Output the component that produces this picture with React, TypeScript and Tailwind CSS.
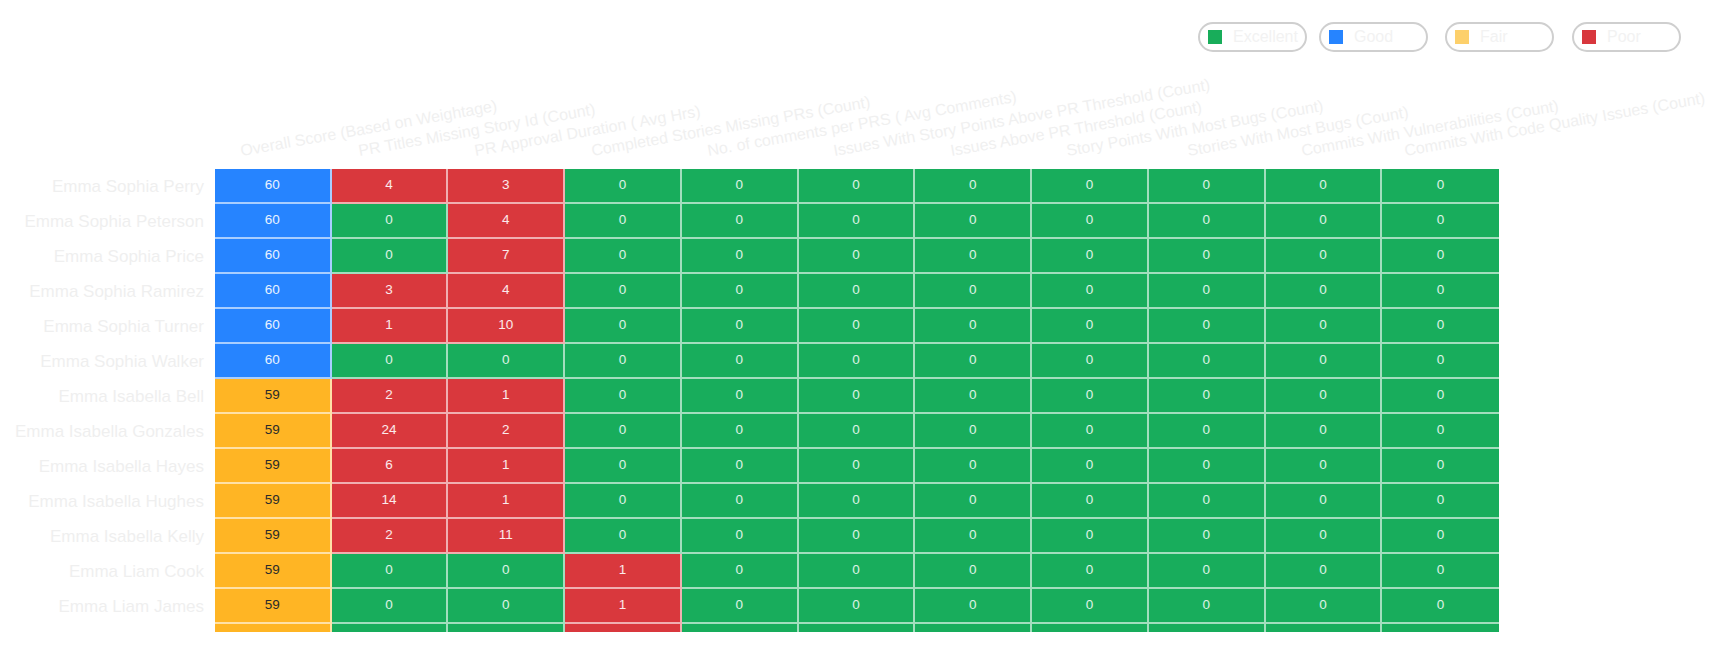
import React from "react";

type Tone = "excellent" | "good" | "fair" | "poor";

const cellTone: Record<Tone, string> = {
  excellent: "bg-[#18ad5c] text-white/85",
  good: "bg-[#2684ff] text-white/90",
  fair: "bg-[#ffb524] text-[#2b2b2b]",
  poor: "bg-[#d9383d] text-white/90",
};

const legend = [
  { label: "Excellent", swatch: "bg-[#18ad5a]", gap: "" },
  { label: "Good", swatch: "bg-[#2684ff]", gap: "ml-[12px]" },
  { label: "Fair", swatch: "bg-[#fdd06b]", gap: "ml-[17px]" },
  { label: "Poor", swatch: "bg-[#d8373d]", gap: "ml-[18px]" },
];

// left offset of each rotated label inside its column
const columns = [
  { label: "Overall Score (Based on Weightage)", offset: "ml-[27px]" },
  { label: "PR Titles Missing Story Id (Count)", offset: "ml-[28px]" },
  { label: "PR Approval Duration ( Avg Hrs)", offset: "ml-[28px]" },
  { label: "Completed Stories Missing PRs (Count)", offset: "ml-[28px]" },
  { label: "No. of comments per PRS ( Avg Comments)", offset: "ml-[27px]" },
  { label: "Issues With Story Points Above PR Threshold (Count)", offset: "ml-[36px]" },
  { label: "Issues Above PR Threshold (Count)", offset: "ml-[37px]" },
  { label: "Story Points With Most Bugs (Count)", offset: "ml-[36px]" },
  { label: "Stories With Most Bugs (Count)", offset: "ml-[40px]" },
  { label: "Commits With Vulnerabilities (Count)", offset: "ml-[37px]" },
  { label: "Commits With Code Quality Issues (Count)", offset: "ml-[24px]" },
];

const rows: { name: string; score: number; prTitles: number; approval: number; missingPrs?: number }[] = [
  { name: "Emma Sophia Perry", score: 60, prTitles: 4, approval: 3 },
  { name: "Emma Sophia Peterson", score: 60, prTitles: 0, approval: 4 },
  { name: "Emma Sophia Price", score: 60, prTitles: 0, approval: 7 },
  { name: "Emma Sophia Ramirez", score: 60, prTitles: 3, approval: 4 },
  { name: "Emma Sophia Turner", score: 60, prTitles: 1, approval: 10 },
  { name: "Emma Sophia Walker", score: 60, prTitles: 0, approval: 0 },
  { name: "Emma Isabella Bell", score: 59, prTitles: 2, approval: 1 },
  { name: "Emma Isabella Gonzales", score: 59, prTitles: 24, approval: 2 },
  { name: "Emma Isabella Hayes", score: 59, prTitles: 6, approval: 1 },
  { name: "Emma Isabella Hughes", score: 59, prTitles: 14, approval: 1 },
  { name: "Emma Isabella Kelly", score: 59, prTitles: 2, approval: 11 },
  { name: "Emma Liam Cook", score: 59, prTitles: 0, approval: 0, missingPrs: 1 },
  { name: "Emma Liam James", score: 59, prTitles: 0, approval: 0, missingPrs: 1 },
  { name: "Emma Liam Powell", score: 59, prTitles: 0, approval: 0, missingPrs: 1 },
];

function toneFor(col: number, value: number): Tone {
  if (col === 0) return value >= 60 ? "good" : "fair";
  return value > 0 ? "poor" : "excellent";
}

export default function App() {
  return (
    <div className="w-[1711px] h-[650px] bg-white overflow-hidden font-['Liberation_Sans',Arial,sans-serif]">
      {/* Legend */}
      <div className="flex justify-end pt-[22px] pr-[30px]">
        {legend.map((l) => (
          <div
            key={l.label}
            className={`${l.gap} flex items-center h-[30px] w-[109px] rounded-full border-2 border-[#cfcfcf] pl-[8px]`}
          >
            <span className={`h-[14px] w-[14px] ${l.swatch}`} />
            <span className="ml-[11px] text-[16px] leading-none text-[#f2f2f2]">{l.label}</span>
          </div>
        ))}
      </div>

      {/* Column labels */}
      <div className="flex h-[117px]">
        <div className="w-[215px] shrink-0" />
        <div className="grid grid-cols-11 w-[1284px] items-end pb-[10px]">
          {columns.map((c) => (
            <div key={c.label} className="h-[16px] relative">
              <span
                className={`${c.offset} block w-max whitespace-nowrap text-[16px] leading-none text-[#f0f0f0] origin-bottom-left -rotate-[10deg]`}
              >
                {c.label}
              </span>
            </div>
          ))}
        </div>
      </div>

      {/* Body */}
      <div className="h-[463px] overflow-hidden">
        {rows.map((r) => {
          const values = [r.score, r.prTitles, r.approval, r.missingPrs ?? 0, 0, 0, 0, 0, 0, 0, 0];
          return (
            <div key={r.name} className="flex h-[35px]">
              <div className="w-[204px] shrink-0 flex items-center justify-end text-[17px] text-[#efefef] whitespace-nowrap">
                {r.name}
              </div>
              <div className="ml-[11px] grid grid-cols-11 w-[1284px]">
                {values.map((v, i) => (
                  <div
                    key={i}
                    className={`${cellTone[toneFor(i, v)]} flex items-center justify-center text-[13.5px] border-b-2 border-white/60 ${
                      i < 10 ? "border-r-2" : ""
                    }`}
                  >
                    {v}
                  </div>
                ))}
              </div>
            </div>
          );
        })}
      </div>
    </div>
  );
}
